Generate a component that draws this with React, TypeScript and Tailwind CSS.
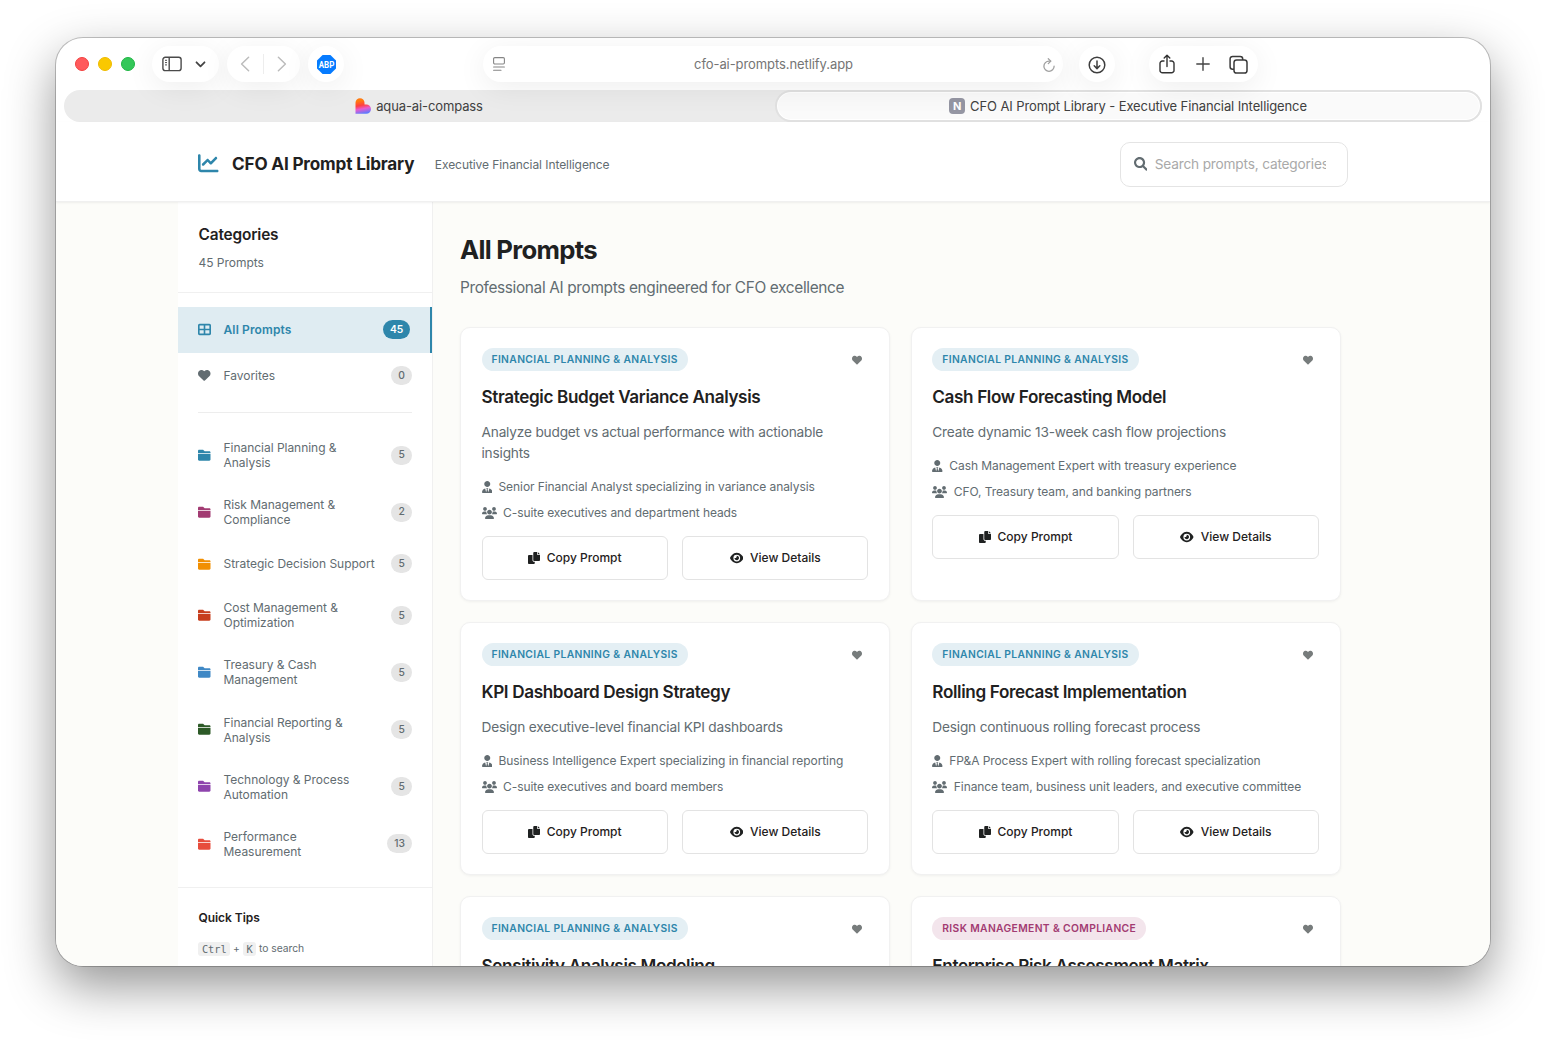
import { clsx } from 'clsx';
import { FaChartLine, FaEye, FaHeart, FaTableCellsLarge } from 'react-icons/fa6';

const categories = [
  { name: 'Financial Planning & Analysis', count: 5, color: 'text-[#2e86ab]' },
  { name: 'Risk Management & Compliance', count: 2, color: 'text-[#a23b72]' },
  { name: 'Strategic Decision Support', count: 5, color: 'text-[#f18f01]' },
  { name: 'Cost Management & Optimization', count: 5, color: 'text-[#c73e1d]' },
  { name: 'Treasury & Cash Management', count: 5, color: 'text-[#3f88c5]' },
  { name: 'Financial Reporting & Analysis', count: 5, color: 'text-[#2d5a27]' },
  { name: 'Technology & Process Automation', count: 5, color: 'text-[#8e44ad]' },
  { name: 'Performance Measurement', count: 13, color: 'text-[#e74c3c]' },
];

interface Prompt {
  category: string;
  title: string;
  description?: string;
  role?: string;
  audience?: string;
  risk?: boolean;
}

const prompts: Prompt[] = [
  {
    category: 'Financial Planning & Analysis',
    title: 'Strategic Budget Variance Analysis',
    description: 'Analyze budget vs actual performance with actionable insights',
    role: 'Senior Financial Analyst specializing in variance analysis',
    audience: 'C-suite executives and department heads',
  },
  {
    category: 'Financial Planning & Analysis',
    title: 'Cash Flow Forecasting Model',
    description: 'Create dynamic 13-week cash flow projections',
    role: 'Cash Management Expert with treasury experience',
    audience: 'CFO, Treasury team, and banking partners',
  },
  {
    category: 'Financial Planning & Analysis',
    title: 'KPI Dashboard Design Strategy',
    description: 'Design executive-level financial KPI dashboards',
    role: 'Business Intelligence Expert specializing in financial reporting',
    audience: 'C-suite executives and board members',
  },
  {
    category: 'Financial Planning & Analysis',
    title: 'Rolling Forecast Implementation',
    description: 'Design continuous rolling forecast process',
    role: 'FP&A Process Expert with rolling forecast specialization',
    audience: 'Finance team, business unit leaders, and executive committee',
  },
  {
    category: 'Financial Planning & Analysis',
    title: 'Sensitivity Analysis Modeling',
  },
  {
    category: 'Risk Management & Compliance',
    title: 'Enterprise Risk Assessment Matrix',
    risk: true,
  },
];

interface IconProps {
  className?: string;
}

const SearchIcon = ({ className }: IconProps) => (
  <svg className={className} viewBox="0 0 512 512" fill="currentColor">
    <path d="M500.3 443.7l-119.7-119.7c27.22-40.41 40.65-90.9 33.46-144.7C401.8 87.79 326.8 13.32 235.2 1.723C99.01-15.51-15.51 99.01 1.724 235.2c11.6 91.64 86.08 166.7 177.6 178.9c53.8 7.189 104.3-6.236 144.7-33.46l119.7 119.7c15.62 15.62 40.95 15.62 56.57 0C515.9 484.7 515.9 459.3 500.3 443.7zM79.1 208c0-70.58 57.42-128 128-128s128 57.42 128 128c0 70.58-57.42 128-128 128S79.1 278.6 79.1 208z" />
  </svg>
);

const FolderIcon = ({ className }: IconProps) => (
  <svg className={className} viewBox="0 0 512 512" fill="currentColor">
    <path d="M0 432C0 458.5 21.5 480 48 480H464C490.5 480 512 458.5 512 432V192H0V432zM464 96H272L208 32H48C21.5 32 0 53.5 0 80V160H512V144C512 117.5 490.5 96 464 96z" />
  </svg>
);

const UserTieIcon = ({ className }: IconProps) => (
  <svg className={className} viewBox="0 0 448 512" fill="currentColor">
    <path d="M352 128C352 198.7 294.7 256 224 256C153.3 256 96 198.7 96 128C96 57.31 153.3 0 224 0C294.7 0 352 57.31 352 128zM209.1 359.2L176 304H272L238.9 359.2L272.2 483.1L311.7 321.9C388.9 333.9 448 400.7 448 481.3C448 498.2 434.2 512 417.3 512H30.72C13.75 512 0 498.2 0 481.3C0 400.7 59.09 333.9 136.3 321.9L175.8 483.1L209.1 359.2z" />
  </svg>
);

const UsersIcon = ({ className }: IconProps) => (
  <svg className={className} viewBox="0 0 640 512" fill="currentColor">
    <path d="M319.9 320c57.41 0 103.1-46.56 103.1-104c0-57.44-46.54-104-103.1-104c-57.41 0-103.1 46.56-103.1 104C215.9 273.4 262.5 320 319.9 320zM369.9 352H270.1C191.6 352 128 411.7 128 485.3C128 500.1 140.7 512 156.4 512h327.2C499.3 512 512 500.1 512 485.3C512 411.7 448.4 352 369.9 352zM512 160c44.18 0 80-35.82 80-80S556.2 0 512 0c-44.18 0-80 35.82-80 80S467.8 160 512 160zM183.9 216c0-5.449 .9824-10.63 1.609-15.91C174.6 194.1 162.6 192 149.9 192H88.08C39.44 192 0 233.8 0 285.3C0 295.6 7.887 304 17.62 304h199.5C196.7 280.2 183.9 249.7 183.9 216zM128 160c44.18 0 80-35.82 80-80S172.2 0 128 0C83.82 0 48 35.82 48 80S83.82 160 128 160zM551.9 192h-61.84c-12.8 0-24.88 3.037-35.86 8.24C454.8 205.5 455.8 210.6 455.8 216c0 33.71-12.78 64.21-33.16 88h199.7C632.1 304 640 295.6 640 285.3C640 233.8 600.6 192 551.9 192z" />
  </svg>
);

const CopyIcon = ({ className }: IconProps) => (
  <svg className={className} viewBox="0 0 512 512" fill="currentColor">
    <path d="M384 96L384 0h-112c-26.51 0-48 21.49-48 48v288c0 26.51 21.49 48 48 48H464c26.51 0 48-21.49 48-48V128h-95.1C398.4 128 384 113.6 384 96zM416 0v96h96L416 0zM192 352V128h-144c-26.51 0-48 21.49-48 48v288c0 26.51 21.49 48 48 48h192c26.51 0 48-21.49 48-48L288 416h-32C220.7 416 192 387.3 192 352z" />
  </svg>
);

const pill = 'flex h-9 items-center rounded-full bg-white shadow-[0_6px_30px_rgba(0,0,0,0.07)]';

const Toolbar = () => (
  <div className="relative z-10 flex h-[52px] shrink-0 items-center pl-[19px]">
    <div className="flex gap-[9px]">
      <span className="size-[14px] rounded-full border border-[#f2413f] bg-[#ff5a5c]" />
      <span className="size-[14px] rounded-full border border-[#eebb00] bg-[#fac800]" />
      <span className="size-[14px] rounded-full border border-[#1fb544] bg-[#34c759]" />
    </div>

    <div className={`${pill} ml-[17px] w-[67px] pl-[10px]`}>
      <svg className="h-4 w-5" viewBox="0 0 20 16" fill="none" stroke="#4a4a4a" strokeWidth="1.4">
        <rect x="0.9" y="1.2" width="18.2" height="13.4" rx="2.4" />
        <path d="M7.2 1.2v13.4" />
        <path d="M3 4.3h2M3 6.6h2M3 8.9h2" strokeWidth="1" />
      </svg>
      <svg className="ml-[13px] mt-px h-[7px] w-[11px]" viewBox="0 0 11 7" fill="none" stroke="#444" strokeWidth="1.8" strokeLinecap="round" strokeLinejoin="round">
        <path d="M1.5 1.3l4 4 4-4" />
      </svg>
    </div>

    <div className={`${pill} ml-2 w-[73px] justify-between px-[13px]`}>
      <svg className="h-4 w-[10px]" viewBox="0 0 10 16" fill="none" stroke="#bcbcbc" strokeWidth="1.5" strokeLinecap="round" strokeLinejoin="round">
        <path d="M8.6 1.2L1.6 8l7 6.8" />
      </svg>
      <span className="h-5 w-px bg-[#ededed]" />
      <svg className="h-4 w-[10px]" viewBox="0 0 10 16" fill="none" stroke="#bcbcbc" strokeWidth="1.5" strokeLinecap="round" strokeLinejoin="round">
        <path d="M1.4 1.2l7 6.8-7 6.8" />
      </svg>
    </div>

    <div className={`${pill} ml-2 w-9 justify-center`}>
      <svg className="size-[19px]" viewBox="0 0 19 19">
        <path d="M5.6 0h7.8L19 5.6v7.8L13.4 19H5.6L0 13.4V5.6z" fill="#067bff" />
        <text x="1.7" y="12.6" fill="#fff" fontFamily="Roboto, sans-serif" fontSize="9" fontWeight="700" textLength="15.6" lengthAdjust="spacingAndGlyphs">
          ABP
        </text>
      </svg>
    </div>

    <div className={`${pill} ml-[139px] w-[580px] justify-between pl-[10px] pr-[7px]`}>
      <svg className="h-[14px] w-3" viewBox="0 0 12 14" fill="none" stroke="#858585" strokeWidth="1.1" strokeLinecap="round">
        <rect x="0.6" y="0.6" width="10.8" height="6.4" rx="1.2" />
        <path d="M0.6 10h10.8M0.6 13.2h7.4" />
      </svg>
      <span className="pt-[2px] text-[13px] tracking-[-0.08px] text-[#757575]">cfo-ai-prompts.netlify.app</span>
      <svg className="mt-px size-[14px]" viewBox="0 0 14 14" fill="none" stroke="#a0a0a0" strokeWidth="1.3" strokeLinecap="round" strokeLinejoin="round">
        <path d="M8.6 3.1H7a5.1 5.1 0 1 0 5.1 5.1" />
        <path d="M6.3 0.7l2.5 2.4-2.5 2.5" />
      </svg>
    </div>

    <div className={`${pill} ml-4 w-9 justify-center`}>
      <svg className="mt-px size-[18px]" viewBox="0 0 18 18" fill="none" stroke="#3e3e3e" strokeWidth="1.5" strokeLinecap="round" strokeLinejoin="round">
        <circle cx="9" cy="9" r="7.8" />
        <path d="M9 5v7.4M6.2 9.8L9 12.6l2.8-2.8" />
      </svg>
    </div>

    <div className={`${pill} ml-[34px] w-[109px] justify-between px-[10px]`}>
      <svg className="h-5 w-4" viewBox="0 0 16 20" fill="none" stroke="#333" strokeWidth="1.4" strokeLinecap="round" strokeLinejoin="round">
        <path d="M5 7H3.4A2.4 2.4 0 0 0 1 9.4v7a2.4 2.4 0 0 0 2.4 2.4h9.2a2.4 2.4 0 0 0 2.4-2.4v-7A2.4 2.4 0 0 0 12.6 7H11" />
        <path d="M8 12.5V1.5M5.2 4L8 1.2 10.8 4" />
      </svg>
      <svg className="ml-px size-[14px]" viewBox="0 0 14 14" fill="none" stroke="#444" strokeWidth="1.4" strokeLinecap="round">
        <path d="M7 0.8v12.4M0.8 7h12.4" />
      </svg>
      <svg className="size-[19px]" viewBox="0 0 19 19" fill="none" stroke="#3a3a3a" strokeWidth="1.5" strokeLinejoin="round">
        <rect x="5" y="5" width="13" height="13" rx="2.6" />
        <path d="M5 14.2H3.6A2.5 2.5 0 0 1 1.1 11.7V3.9A2.5 2.5 0 0 1 3.600 1.400h7.600A2.500 2.500 0 0 1 13.700 3.900v1.100" />
      </svg>
    </div>
  </div>
);

const TabBar = () => (
  <div className="mx-2 flex h-8 shrink-0 rounded-full bg-[#ebebeb] text-[13px] tracking-[-0.11px] text-[#404040]">
    <div className="flex flex-1 items-center justify-center gap-[5px] pr-px">
      <svg className="size-4" viewBox="0 0 16 16">
        <defs>
          <linearGradient id="heart" x1="0.3" y1="0" x2="0.5" y2="1">
            <stop offset="0.15" stopColor="#ff7a0f" />
            <stop offset="0.45" stopColor="#ff4040" />
            <stop offset="0.68" stopColor="#e85ad0" />
            <stop offset="1" stopColor="#5b7cff" />
          </linearGradient>
        </defs>
        <path d="M0.5 4.8a4.5 4.5 0 0 1 9 0v1.7h1.8a4.6 4.6 0 0 1 0 9.3H0.5z" fill="url(#heart)" />
      </svg>
      <span className="pt-[2px]">aqua-ai-compass</span>
    </div>
    <div className="flex w-[707px] items-center justify-center gap-[5px] rounded-full border-2 border-[#e1e1e1] bg-[#fafafa] pr-px shadow-[inset_0_0_0_1px_#fff]">
      <span className="flex size-4 items-center justify-center rounded-[4px] bg-[#9596a3] text-[11px] font-bold text-white">N</span>
      <span className="pt-[2px]">CFO AI Prompt Library - Executive Financial Intelligence</span>
    </div>
  </div>
);

const Header = () => (
  <header className="relative z-10 flex h-20 shrink-0 items-center border-b border-[#f0f0f0] bg-white px-[142px] pt-[5px] shadow-[0_1px_2px_rgba(0,0,0,0.06)]">
    <FaChartLine className="-mt-px size-[20.5px] text-[#2e86ab]" />
    <h1 className="ml-[13.5px] text-[17.14px] font-bold tracking-[-0.17px] text-[#1f2121]">CFO AI Prompt Library</h1>
    <span className="ml-[20.5px] pt-[2px] text-[12px] tracking-[-0.07px] text-[#626c71]">Executive Financial Intelligence</span>
    <label className="ml-auto flex h-[45px] w-[228px] items-center rounded-[10px] border border-[#e4e4e4] bg-white pl-[12.5px] pr-[21px]">
      <SearchIcon className="size-[13.7px] shrink-0 text-[#626c71]" />
      <input
        type="text"
        placeholder="Search prompts, categories..."
        className="ml-[7.5px] w-0 flex-1 text-[13.7px] tracking-[-0.19px] outline-none placeholder:text-[#a9a9a9]"
      />
    </label>
  </header>
);

const CountBadge = ({ count, active }: { count: number; active?: boolean }) => (
  <span
    className={clsx(
      'flex h-[19px] items-center rounded-full text-[10.3px]',
      active ? 'bg-[#2e86ab] px-[6.8px] font-semibold text-white' : 'bg-[#e5e5e5] px-[7.2px] font-medium text-[#626c71]'
    )}
  >
    {count}
  </span>
);

const Sidebar = () => (
  <aside className="w-[255px] shrink-0 border-r border-[#f0f0f0] bg-white text-[12px] tracking-[-0.03px] text-[#626c71]">
    <div className="h-[91px] border-b border-[#f0f0f0] px-[20.5px] pt-[23px]">
      <h2 className="text-[15.4px] font-semibold leading-5 tracking-[-0.15px] text-[#1f2121]">Categories</h2>
      <p className="mt-[9px] leading-[18px]">45 Prompts</p>
    </div>

    <nav className="pt-[14px]">
      <div className="flex h-[45.7px] items-center border-r-2 border-[#2e86ab] bg-[#dfecf2] px-5 text-[#2e86ab]">
        <FaTableCellsLarge className="size-[13px]" />
        <span className="ml-[12.5px] flex-1 font-semibold tracking-[0.13px]">All Prompts</span>
        <CountBadge count={45} active />
      </div>
      <div className="flex h-[45.7px] items-center px-5">
        <FaHeart className="size-[12.5px]" />
        <span className="ml-[13px] flex-1">Favorites</span>
        <CountBadge count={0} />
      </div>
      <div className="mx-5 my-[13.6px] h-px bg-[#ededed]" />
      {categories.map((category) => (
        <div key={category.name} className="flex min-h-[45.2px] items-center px-5 py-[13.55px]">
          <FolderIcon className={clsx('size-[12.5px] shrink-0', category.color)} />
          <span className="ml-[13px] mr-[10px] flex-1 leading-[15px]">{category.name}</span>
          <CountBadge count={category.count} />
        </div>
      ))}
    </nav>

    <div className="mt-[14.4px] border-t border-[#f0f0f0] px-[20.4px] pt-[21px]">
      <h3 className="font-semibold leading-[18px] text-[#1f2121]">Quick Tips</h3>
      <p className="mt-[13px] flex h-[18px] items-center text-[10.3px]">
        <kbd className="rounded-[3px] bg-[#f0f0f0] px-[3.5px] font-['DejaVu_Sans_Mono',monospace] text-[10.3px] leading-[14px]">Ctrl</kbd>
        <span className="mx-[3px]">+</span>
        <kbd className="rounded-[3px] bg-[#f0f0f0] px-[3.5px] font-['DejaVu_Sans_Mono',monospace] text-[10.3px] leading-[14px]">K</kbd>
        <span className="ml-[3px]">to search</span>
      </p>
    </div>
  </aside>
);

const PromptCard = ({ prompt }: { prompt: Prompt }) => (
  <article className="rounded-[10px] border border-[#f1f1f1] bg-white pb-5 pl-[20.5px] pr-[20.9px] pt-5 shadow-[0_1px_3px_rgba(0,0,0,0.05)]">
    <div className="flex items-center justify-between pr-[6.5px]">
      <span
        className={clsx(
          'flex h-[23px] items-center rounded-full px-[10px] text-[10.3px] font-semibold uppercase tracking-[0.36px]',
          prompt.risk ? 'bg-[#f3e5ec] text-[#a23b72]' : 'bg-[#e4eff4] text-[#2e86ab]'
        )}
      >
        {prompt.category}
      </span>
      <FaHeart className="mt-[1.6px] size-[10px] text-[#777c7c]" />
    </div>
    <h3 className="mt-[15px] text-[17.14px] font-semibold leading-[22px] tracking-[-0.36px] text-[#1f2121]">{prompt.title}</h3>
    {prompt.description && (
      <>
        <p className="mt-[13.5px] text-[13.7px] leading-[21px] tracking-[-0.2px] text-[#626c71]">{prompt.description}</p>
        <div className="mt-[14.5px] flex flex-col gap-2 text-[12px] leading-[18px] tracking-[-0.075px] text-[#626c71]">
          <div className="flex items-center">
            <UserTieIcon className="h-3 w-[10.5px]" />
            <span className="ml-[6.5px]">{prompt.role}</span>
          </div>
          <div className="flex items-center">
            <UsersIcon className="h-3 w-[15px]" />
            <span className="ml-[6.5px]">{prompt.audience}</span>
          </div>
        </div>
        <div className="mt-[14px] grid grid-cols-2 gap-[14px] text-[12px] font-medium text-[#1f2121]">
          <button className="flex h-11 items-center justify-center gap-[7px] rounded-[6px] border border-[#e3e3e3]">
            <CopyIcon className="size-3" />
            Copy Prompt
          </button>
          <button className="flex h-11 items-center justify-center gap-[7px] rounded-[6px] border border-[#e3e3e3]">
            <FaEye className="h-3 w-[13.5px]" />
            View Details
          </button>
        </div>
      </>
    )}
  </article>
);

const App = () => {
  return (
    <div className="h-[1040px] w-[1546px] overflow-hidden bg-white pl-[56px] pt-[38px] font-['Inter',sans-serif]">
      <div className="flex h-[928px] w-[1434px] flex-col overflow-hidden rounded-[27px] bg-white shadow-[0_0_0_1px_rgba(0,0,0,0.22),0_20px_50px_rgba(0,0,0,0.42)]">
        <Toolbar />
        <TabBar />
        <Header />
        <div className="flex min-h-0 flex-1 overflow-hidden bg-[#fcfcf9] pl-[122px]">
          <Sidebar />
          <main className="w-[908px] pl-[27px] pt-8">
            <h2 className="text-[25.7px] font-bold leading-8 tracking-[-0.71px] text-[#1f2121]">All Prompts</h2>
            <p className="mt-[10px] text-[15.4px] leading-6 tracking-[-0.35px] text-[#626c71]">
              Professional AI prompts engineered for CFO excellence
            </p>
            <div className="mt-[27px] grid grid-cols-2 gap-x-[20.6px] gap-y-[21.1px]">
              {prompts.map((prompt) => (
                <PromptCard key={prompt.title} prompt={prompt} />
              ))}
            </div>
          </main>
        </div>
      </div>
    </div>
  );
};

export default App;
